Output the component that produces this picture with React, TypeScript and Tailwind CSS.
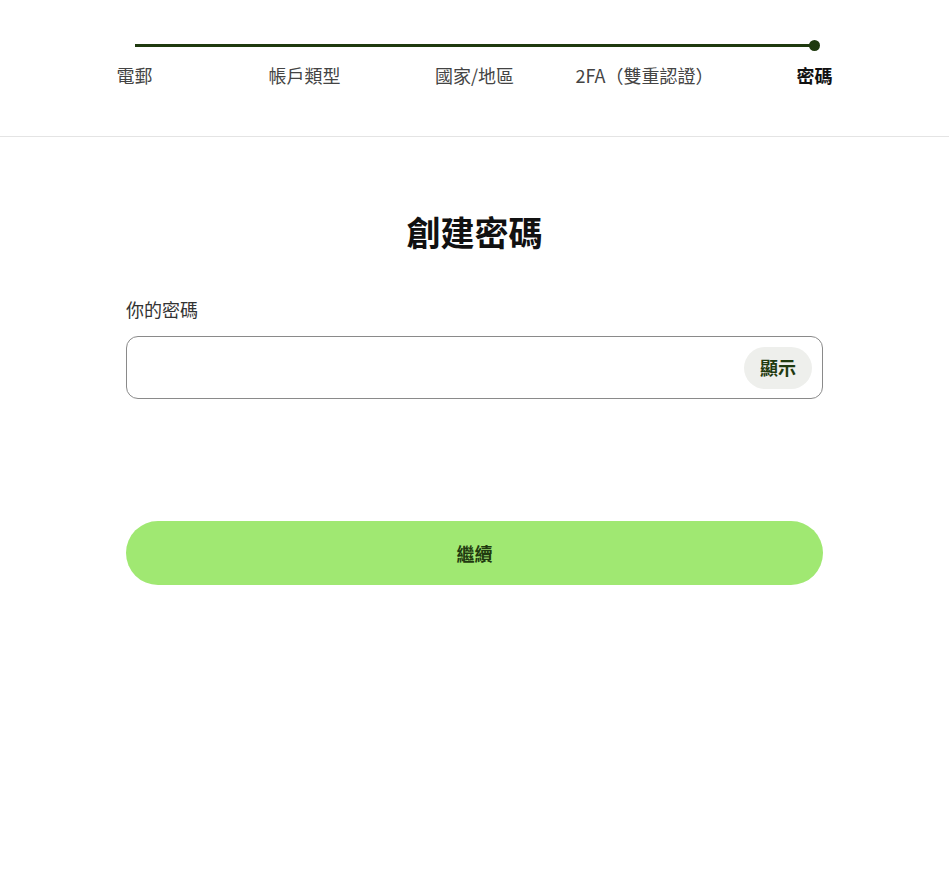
const STEPS = ["電郵", "帳戶類型", "國家/地區", "2FA（雙重認證）", "密碼"];

const FONT = {
  fontFamily: '"Noto Sans CJK TC", "Noto Sans", sans-serif',
};

export default function App() {
  return (
    <div className="min-h-screen bg-white text-[#111]" style={FONT}>
      <header className="border-b border-[#e4e4e4] pb-[49px] pt-[44px]">
        <div className="relative mx-auto w-[850px]">
          {/* progress track, from centre of the first step to the last */}
          <div className="absolute left-[85px] right-[85px] top-0 h-[3px] bg-[#1f3a0f]" />
          <div className="absolute right-[80px] top-[-4px] h-[11px] w-[11px] rounded-full bg-[#1f3a0f]" />
          <div className="grid grid-cols-5 pt-[19px]">
            {STEPS.map((step, i) => (
              <div
                key={step}
                className={
                  i === STEPS.length - 1
                    ? "text-center text-[18px] font-bold leading-[24px] text-[#111]"
                    : "text-center text-[18px] leading-[24px] text-[#444]"
                }
              >
                {step}
              </div>
            ))}
          </div>
        </div>
      </header>

      <main className="mx-auto w-[697px] pt-[71px]">
        <h1 className="text-center text-[34px] font-bold leading-[48px] text-[#111]">創建密碼</h1>

        <label className="mt-[41px] block text-[18px] leading-[24px] text-[#333]">你的密碼</label>
        <div className="mt-[15px] flex h-[63px] items-center rounded-[12px] border border-[#8a8a8a] pl-4 pr-[10px]">
          <input type="password" className="h-full flex-1 bg-transparent text-[18px] outline-none" />
          <button className="h-[42px] rounded-full bg-[#eeefec] px-[16px] text-[18px] font-bold text-[#1f3a0f]">
            顯示
          </button>
        </div>

        <button className="mt-[122px] h-[64px] w-full rounded-full bg-[#a0e872] text-[18px] font-bold text-[#1f3a0f]">
          繼續
        </button>
      </main>
    </div>
  );
}
